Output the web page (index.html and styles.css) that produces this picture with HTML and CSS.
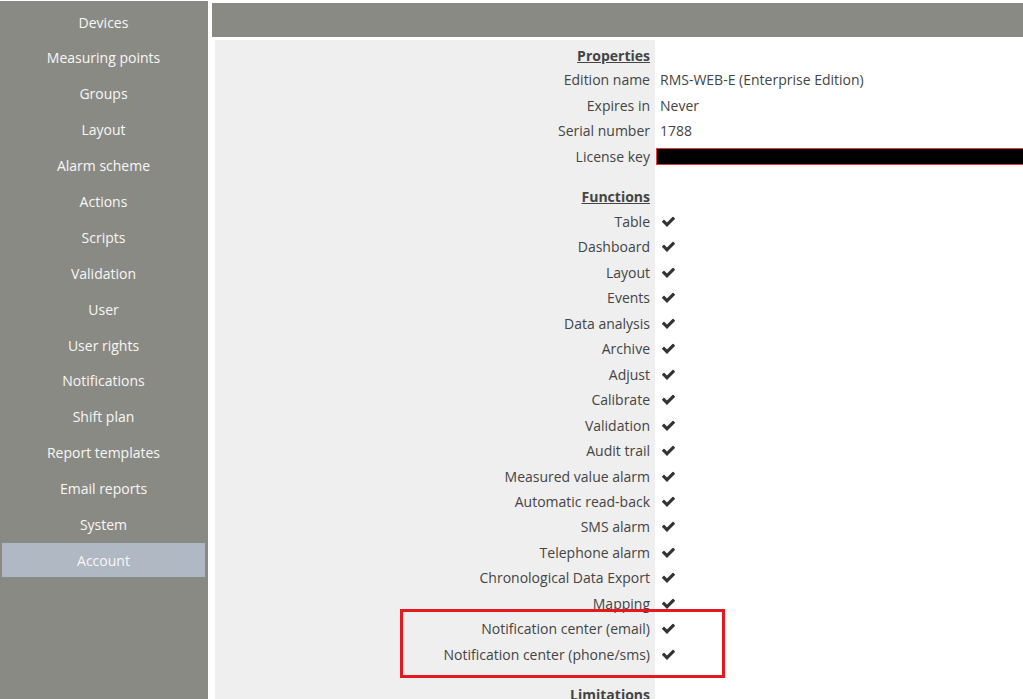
FILE: index.html
```html
<!DOCTYPE html>
<html lang="en">
<head>
    <meta charset="UTF-8">
    <title>Account</title>
    <link rel="stylesheet" href="styles.css">
</head>
<body>
    <div class="page">
        <nav class="sidebar">
            <a class="nav-item">Devices</a>
            <a class="nav-item">Measuring points</a>
            <a class="nav-item">Groups</a>
            <a class="nav-item">Layout</a>
            <a class="nav-item">Alarm scheme</a>
            <a class="nav-item">Actions</a>
            <a class="nav-item">Scripts</a>
            <a class="nav-item">Validation</a>
            <a class="nav-item">User</a>
            <a class="nav-item">User rights</a>
            <a class="nav-item">Notifications</a>
            <a class="nav-item">Shift plan</a>
            <a class="nav-item">Report templates</a>
            <a class="nav-item">Email reports</a>
            <a class="nav-item">System</a>
            <a class="nav-item active">Account</a>
        </nav>

        <main class="main">
            <div class="topbar"></div>
            <table class="account-table">
                <colgroup>
                    <col class="col-label">
                    <col>
                </colgroup>
                <tr class="section"><th>Properties</th><td></td></tr>
                <tr><th>Edition name</th><td>RMS-WEB-E (Enterprise Edition)</td></tr>
                <tr><th>Expires in</th><td>Never</td></tr>
                <tr><th>Serial number</th><td>1788</td></tr>
                <tr><th>License key</th><td><div class="redacted"></div></td></tr>
                <tr class="spacer"><th></th><td></td></tr>
                <tr class="section"><th>Functions</th><td></td></tr>
                <tr><th>Table</th><td class="check"><svg viewBox="0 0 1792 1792"><path d="M1671 566q0 40-28 68l-724 724-136 136q-28 28-68 28t-68-28l-136-136-362-362q-28-28-28-68t28-68l136-136q28-28 68-28t68 28l294 295 656-657q28-28 68-28t68 28l136 136q28 28 28 68z"/></svg></td></tr>
                <tr><th>Dashboard</th><td class="check"><svg viewBox="0 0 1792 1792"><path d="M1671 566q0 40-28 68l-724 724-136 136q-28 28-68 28t-68-28l-136-136-362-362q-28-28-28-68t28-68l136-136q28-28 68-28t68 28l294 295 656-657q28-28 68-28t68 28l136 136q28 28 28 68z"/></svg></td></tr>
                <tr><th>Layout</th><td class="check"><svg viewBox="0 0 1792 1792"><path d="M1671 566q0 40-28 68l-724 724-136 136q-28 28-68 28t-68-28l-136-136-362-362q-28-28-28-68t28-68l136-136q28-28 68-28t68 28l294 295 656-657q28-28 68-28t68 28l136 136q28 28 28 68z"/></svg></td></tr>
                <tr><th>Events</th><td class="check"><svg viewBox="0 0 1792 1792"><path d="M1671 566q0 40-28 68l-724 724-136 136q-28 28-68 28t-68-28l-136-136-362-362q-28-28-28-68t28-68l136-136q28-28 68-28t68 28l294 295 656-657q28-28 68-28t68 28l136 136q28 28 28 68z"/></svg></td></tr>
                <tr><th>Data analysis</th><td class="check"><svg viewBox="0 0 1792 1792"><path d="M1671 566q0 40-28 68l-724 724-136 136q-28 28-68 28t-68-28l-136-136-362-362q-28-28-28-68t28-68l136-136q28-28 68-28t68 28l294 295 656-657q28-28 68-28t68 28l136 136q28 28 28 68z"/></svg></td></tr>
                <tr><th>Archive</th><td class="check"><svg viewBox="0 0 1792 1792"><path d="M1671 566q0 40-28 68l-724 724-136 136q-28 28-68 28t-68-28l-136-136-362-362q-28-28-28-68t28-68l136-136q28-28 68-28t68 28l294 295 656-657q28-28 68-28t68 28l136 136q28 28 28 68z"/></svg></td></tr>
                <tr><th>Adjust</th><td class="check"><svg viewBox="0 0 1792 1792"><path d="M1671 566q0 40-28 68l-724 724-136 136q-28 28-68 28t-68-28l-136-136-362-362q-28-28-28-68t28-68l136-136q28-28 68-28t68 28l294 295 656-657q28-28 68-28t68 28l136 136q28 28 28 68z"/></svg></td></tr>
                <tr><th>Calibrate</th><td class="check"><svg viewBox="0 0 1792 1792"><path d="M1671 566q0 40-28 68l-724 724-136 136q-28 28-68 28t-68-28l-136-136-362-362q-28-28-28-68t28-68l136-136q28-28 68-28t68 28l294 295 656-657q28-28 68-28t68 28l136 136q28 28 28 68z"/></svg></td></tr>
                <tr><th>Validation</th><td class="check"><svg viewBox="0 0 1792 1792"><path d="M1671 566q0 40-28 68l-724 724-136 136q-28 28-68 28t-68-28l-136-136-362-362q-28-28-28-68t28-68l136-136q28-28 68-28t68 28l294 295 656-657q28-28 68-28t68 28l136 136q28 28 28 68z"/></svg></td></tr>
                <tr><th>Audit trail</th><td class="check"><svg viewBox="0 0 1792 1792"><path d="M1671 566q0 40-28 68l-724 724-136 136q-28 28-68 28t-68-28l-136-136-362-362q-28-28-28-68t28-68l136-136q28-28 68-28t68 28l294 295 656-657q28-28 68-28t68 28l136 136q28 28 28 68z"/></svg></td></tr>
                <tr><th>Measured value alarm</th><td class="check"><svg viewBox="0 0 1792 1792"><path d="M1671 566q0 40-28 68l-724 724-136 136q-28 28-68 28t-68-28l-136-136-362-362q-28-28-28-68t28-68l136-136q28-28 68-28t68 28l294 295 656-657q28-28 68-28t68 28l136 136q28 28 28 68z"/></svg></td></tr>
                <tr><th>Automatic read-back</th><td class="check"><svg viewBox="0 0 1792 1792"><path d="M1671 566q0 40-28 68l-724 724-136 136q-28 28-68 28t-68-28l-136-136-362-362q-28-28-28-68t28-68l136-136q28-28 68-28t68 28l294 295 656-657q28-28 68-28t68 28l136 136q28 28 28 68z"/></svg></td></tr>
                <tr><th>SMS alarm</th><td class="check"><svg viewBox="0 0 1792 1792"><path d="M1671 566q0 40-28 68l-724 724-136 136q-28 28-68 28t-68-28l-136-136-362-362q-28-28-28-68t28-68l136-136q28-28 68-28t68 28l294 295 656-657q28-28 68-28t68 28l136 136q28 28 28 68z"/></svg></td></tr>
                <tr><th>Telephone alarm</th><td class="check"><svg viewBox="0 0 1792 1792"><path d="M1671 566q0 40-28 68l-724 724-136 136q-28 28-68 28t-68-28l-136-136-362-362q-28-28-28-68t28-68l136-136q28-28 68-28t68 28l294 295 656-657q28-28 68-28t68 28l136 136q28 28 28 68z"/></svg></td></tr>
                <tr><th>Chronological Data Export</th><td class="check"><svg viewBox="0 0 1792 1792"><path d="M1671 566q0 40-28 68l-724 724-136 136q-28 28-68 28t-68-28l-136-136-362-362q-28-28-28-68t28-68l136-136q28-28 68-28t68 28l294 295 656-657q28-28 68-28t68 28l136 136q28 28 28 68z"/></svg></td></tr>
                <tr><th>Mapping</th><td class="check"><svg viewBox="0 0 1792 1792"><path d="M1671 566q0 40-28 68l-724 724-136 136q-28 28-68 28t-68-28l-136-136-362-362q-28-28-28-68t28-68l136-136q28-28 68-28t68 28l294 295 656-657q28-28 68-28t68 28l136 136q28 28 28 68z"/></svg></td></tr>
                <tr><th>Notification center (email)</th><td class="check"><svg viewBox="0 0 1792 1792"><path d="M1671 566q0 40-28 68l-724 724-136 136q-28 28-68 28t-68-28l-136-136-362-362q-28-28-28-68t28-68l136-136q28-28 68-28t68 28l294 295 656-657q28-28 68-28t68 28l136 136q28 28 28 68z"/></svg></td></tr>
                <tr><th>Notification center (phone/sms)</th><td class="check"><svg viewBox="0 0 1792 1792"><path d="M1671 566q0 40-28 68l-724 724-136 136q-28 28-68 28t-68-28l-136-136-362-362q-28-28-28-68t28-68l136-136q28-28 68-28t68 28l294 295 656-657q28-28 68-28t68 28l136 136q28 28 28 68z"/></svg></td></tr>
                <tr class="spacer"><th></th><td></td></tr>
                <tr class="section"><th>Limitations</th><td></td></tr>
            </table>
        </main>
    </div>

    <div class="highlight-box"></div>
</body>
</html>
```

FILE: styles.css
```css
* {
    box-sizing: border-box;
}

body {
    margin: 0;
    font-family: "Open Sans", "Noto Sans", sans-serif;
    background-color: #ffffff;
    height: 699px;
    overflow: hidden;
}

.page {
    display: flex;
    align-items: flex-start;
}

/* left menu */
.sidebar {
    width: 208px;
    flex-shrink: 0;
    height: 699px;
    margin-top: 1px;
    background-color: #8a8a84;
    padding: 4px 3px 0 2px;
    display: flex;
    flex-direction: column;
    gap: 1.9px;
}

.nav-item {
    display: flex;
    align-items: center;
    justify-content: center;
    height: 34px;
    color: #f7f7f7;
    font-size: 14px;
    cursor: pointer;
}

.nav-item.active {
    background-color: #b0b8c3;
}

/* content */
.main {
    flex: 1;
    margin-left: 4px;
    padding-top: 3px;
}

.topbar {
    height: 34px;
    background-color: #8a8a84;
}

.account-table {
    margin: 3px 0 0 3px;
    border-collapse: collapse;
    width: calc(100% - 3px);
    table-layout: fixed;
    font-size: 14px;
    color: #444;
}

.col-label {
    width: 440px;
}

.account-table tr {
    height: 25.47px;
}

.account-table th {
    background-color: #efefef;
    text-align: right;
    font-weight: normal;
    padding: 0 5px 0 0;
    white-space: nowrap;
}

.account-table td {
    padding: 0 0 0 5px;
    white-space: nowrap;
}

.account-table tr.section {
    height: 27.25px;
}

.account-table tr.section th {
    font-weight: bold;
    text-decoration: underline;
    padding-top: 3px;
}

.account-table tr.spacer {
    height: 12.25px;
}

.redacted {
    height: 17px;
    margin-left: -4px;
    margin-right: -20px;
    background-color: #000;
    border: 1px solid #e23c3c;
}

.check svg {
    width: 17px;
    height: 15px;
    fill: #333;
    display: block;
}

/* annotation frame */
.highlight-box {
    position: absolute;
    left: 400px;
    top: 609px;
    width: 325px;
    height: 69px;
    border: 3px solid #e3191f;
}
```
